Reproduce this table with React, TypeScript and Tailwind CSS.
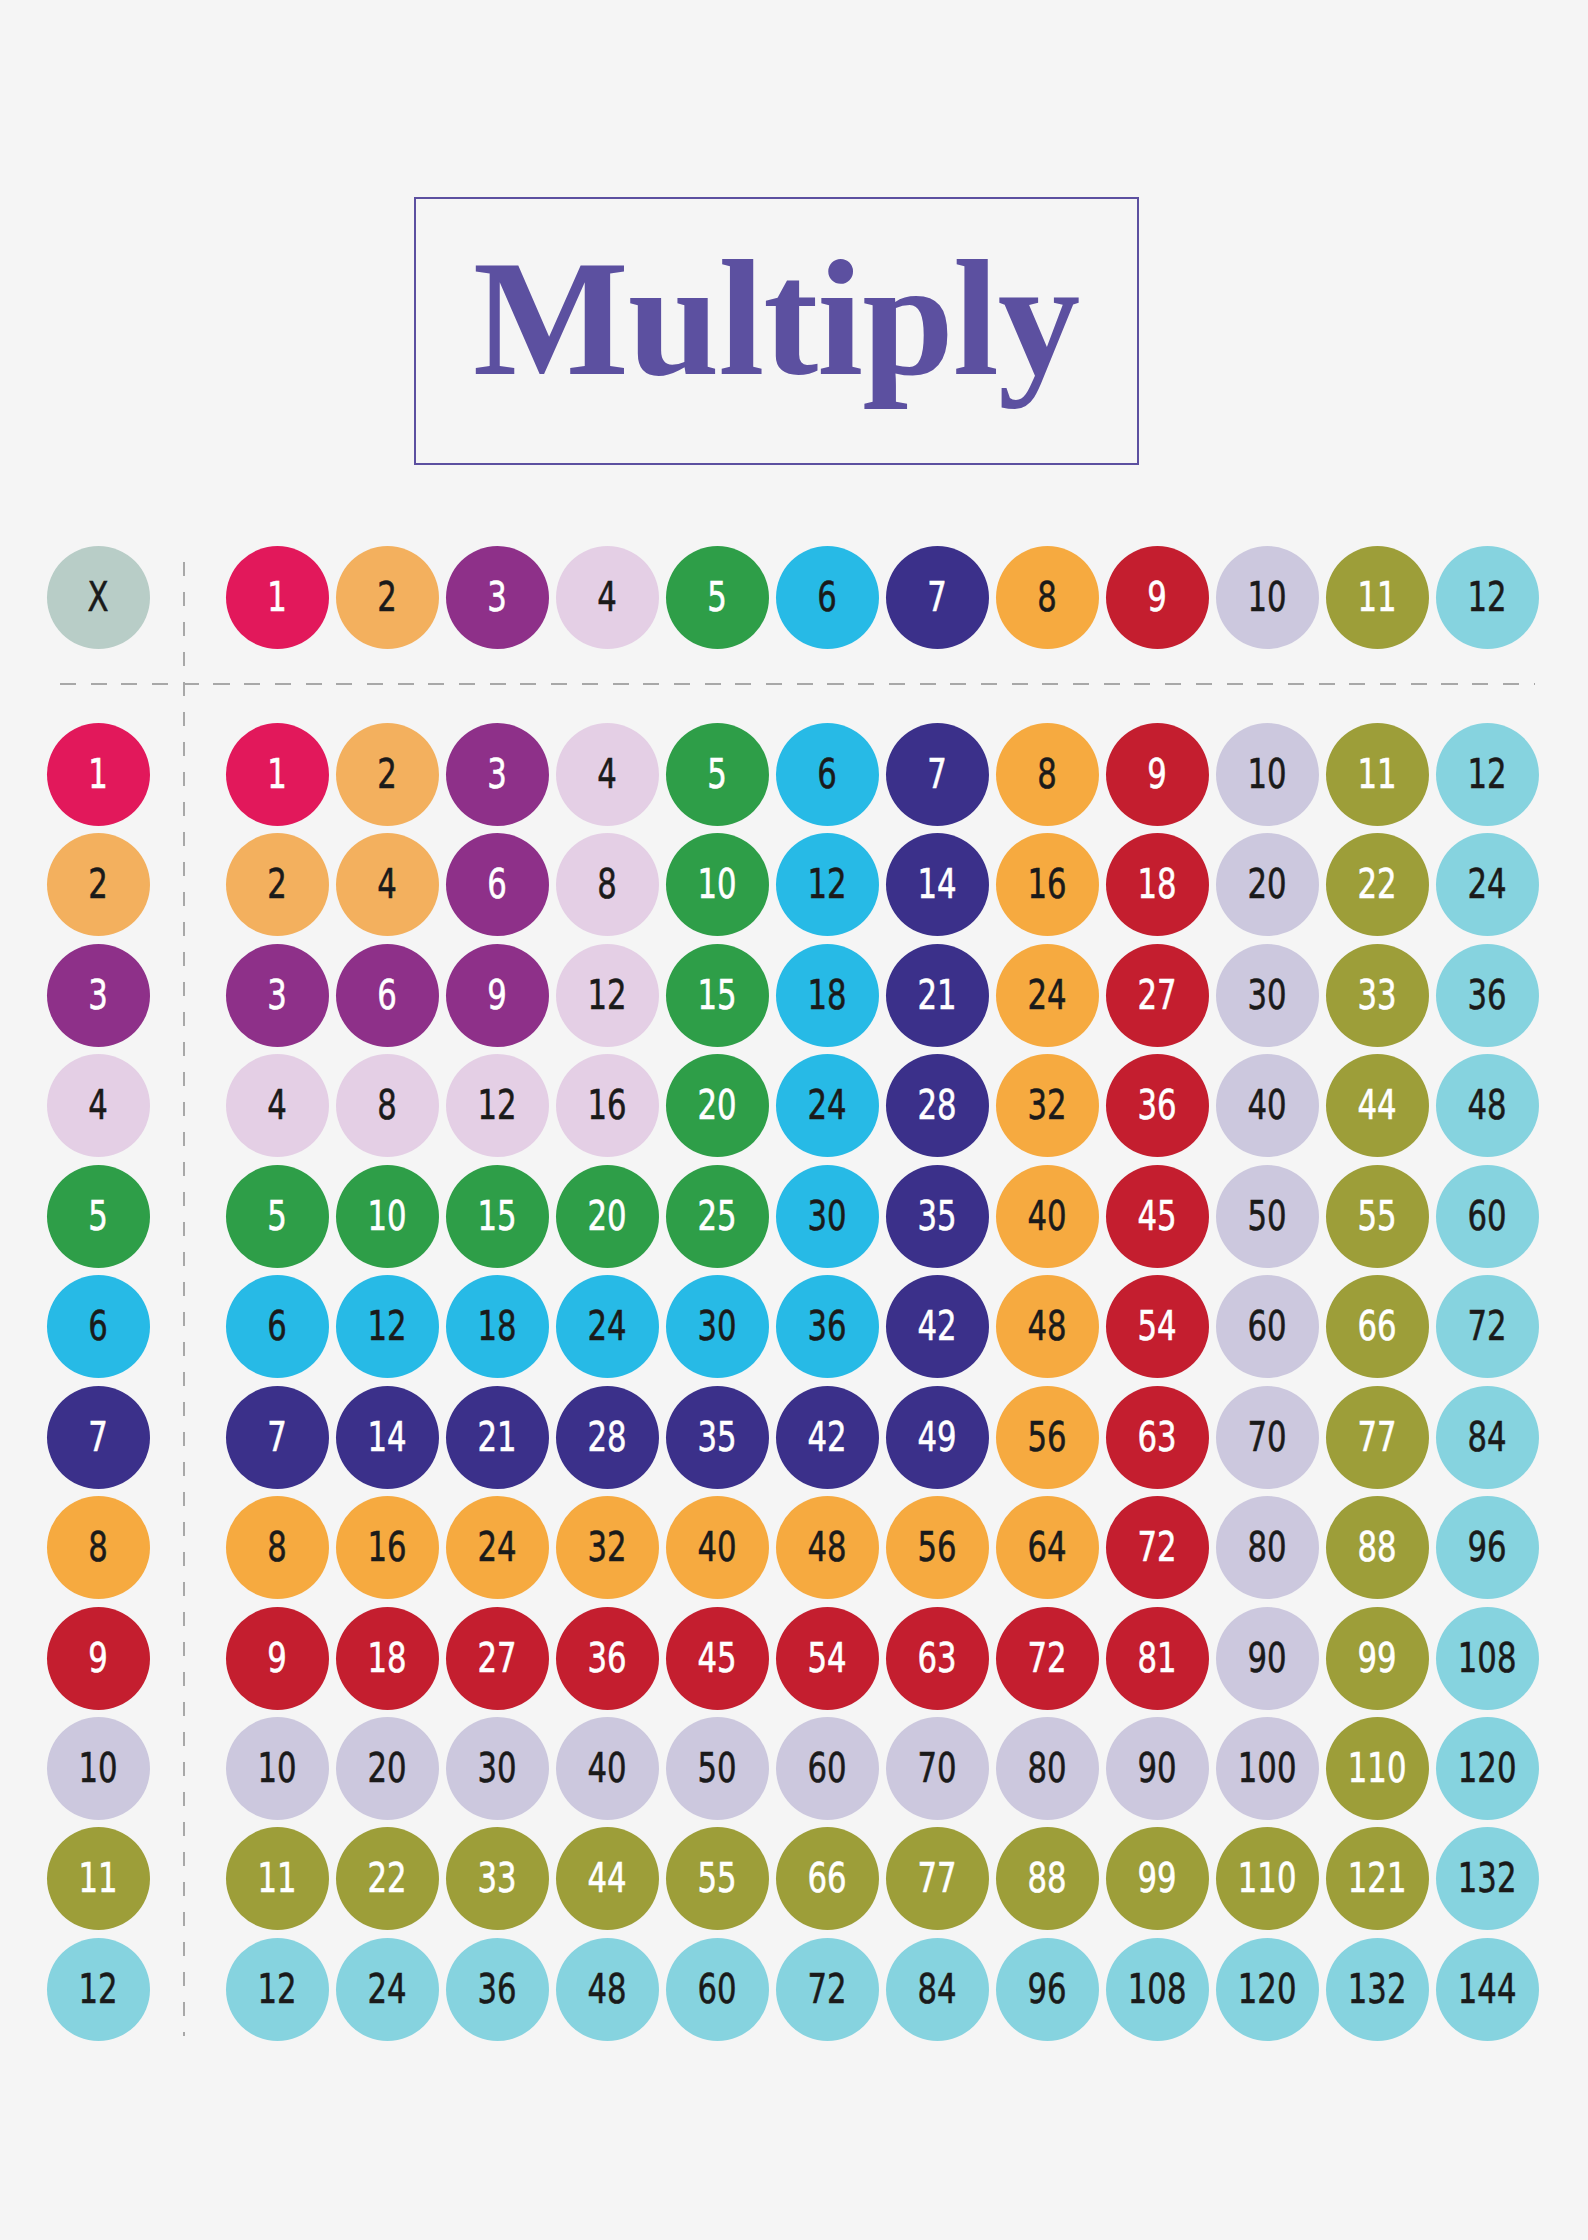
import React from 'react';

const palette: Record<number, { bg: string; text: string }> = {
  1: { bg: 'bg-[#e2185b]', text: 'text-white' },
  2: { bg: 'bg-[#f3b05e]', text: 'text-[#1a1a1a]' },
  3: { bg: 'bg-[#8e3089]', text: 'text-white' },
  4: { bg: 'bg-[#e4cfe5]', text: 'text-[#1a1a1a]' },
  5: { bg: 'bg-[#2e9e48]', text: 'text-white' },
  6: { bg: 'bg-[#27bae6]', text: 'text-[#1a1a1a]' },
  7: { bg: 'bg-[#3b308a]', text: 'text-white' },
  8: { bg: 'bg-[#f6aa40]', text: 'text-[#1a1a1a]' },
  9: { bg: 'bg-[#c41e2f]', text: 'text-white' },
  10: { bg: 'bg-[#ccc8de]', text: 'text-[#1a1a1a]' },
  11: { bg: 'bg-[#9d9e39]', text: 'text-white' },
  12: { bg: 'bg-[#86d3df]', text: 'text-[#1a1a1a]' },
};

const numbers = Array.from({ length: 12 }, (_, i) => i + 1);

function Dot({ value, tone }: { value: number | string; tone: number | 'x' }) {
  const colors = tone === 'x' ? { bg: 'bg-[#b8cdc7]', text: 'text-[#1a1a1a]' } : palette[tone];
  return (
    <div
      className={`flex h-[103px] w-[103px] items-center justify-center rounded-full ${colors.bg} ${colors.text}`}
    >
      <span className="inline-block scale-x-[0.75] font-['DejaVu_Sans',sans-serif] text-[41px] leading-none [-webkit-text-stroke:0.6px_currentColor]">
        {value}
      </span>
    </div>
  );
}

export default function App() {
  return (
    <div className="min-h-[2240px] w-[1588px] bg-[#f5f5f5] pt-[197px]">
      <div className="ml-[414px] h-[268px] w-[725px] border-2 border-[#5c50a0] pl-[57px] pt-[37px]">
        <h1 className="font-['Liberation_Serif',serif] text-[165px] font-bold leading-none tracking-[-1px] text-[#5c50a0]">
          Multiply
        </h1>
      </div>

      <div className="ml-[47px] mt-[81px] grid grid-cols-[103px_76px_1313px] grid-rows-[103px_74px_auto]">
        <div className="col-start-1 row-start-1">
          <Dot value="X" tone="x" />
        </div>

        <div className="col-start-2 row-start-1 row-end-4 ml-[33px] mt-[16px] h-[1474px] w-[2px] bg-[repeating-linear-gradient(180deg,#a8a8a8_0_14px,transparent_14px_30px)]" />

        <div className="col-start-1 col-end-4 row-start-2 ml-[13px] mt-[34px] h-[2px] w-[1475px] bg-[repeating-linear-gradient(90deg,#a8a8a8_0_16px,transparent_16px_30.7px)]" />

        <div className="col-start-3 row-start-1 grid grid-cols-[repeat(12,103px)] gap-x-[7px]">
          {numbers.map((n) => (
            <Dot key={n} value={n} tone={n} />
          ))}
        </div>

        <div className="col-start-1 row-start-3 flex flex-col gap-y-[7.45px]">
          {numbers.map((n) => (
            <Dot key={n} value={n} tone={n} />
          ))}
        </div>

        <div className="col-start-3 row-start-3 grid grid-cols-[repeat(12,103px)] gap-x-[7px] gap-y-[7.45px]">
          {numbers.map((row) =>
            numbers.map((col) => (
              <Dot key={`${row}-${col}`} value={row * col} tone={Math.max(row, col)} />
            ))
          )}
        </div>
      </div>
    </div>
  );
}
